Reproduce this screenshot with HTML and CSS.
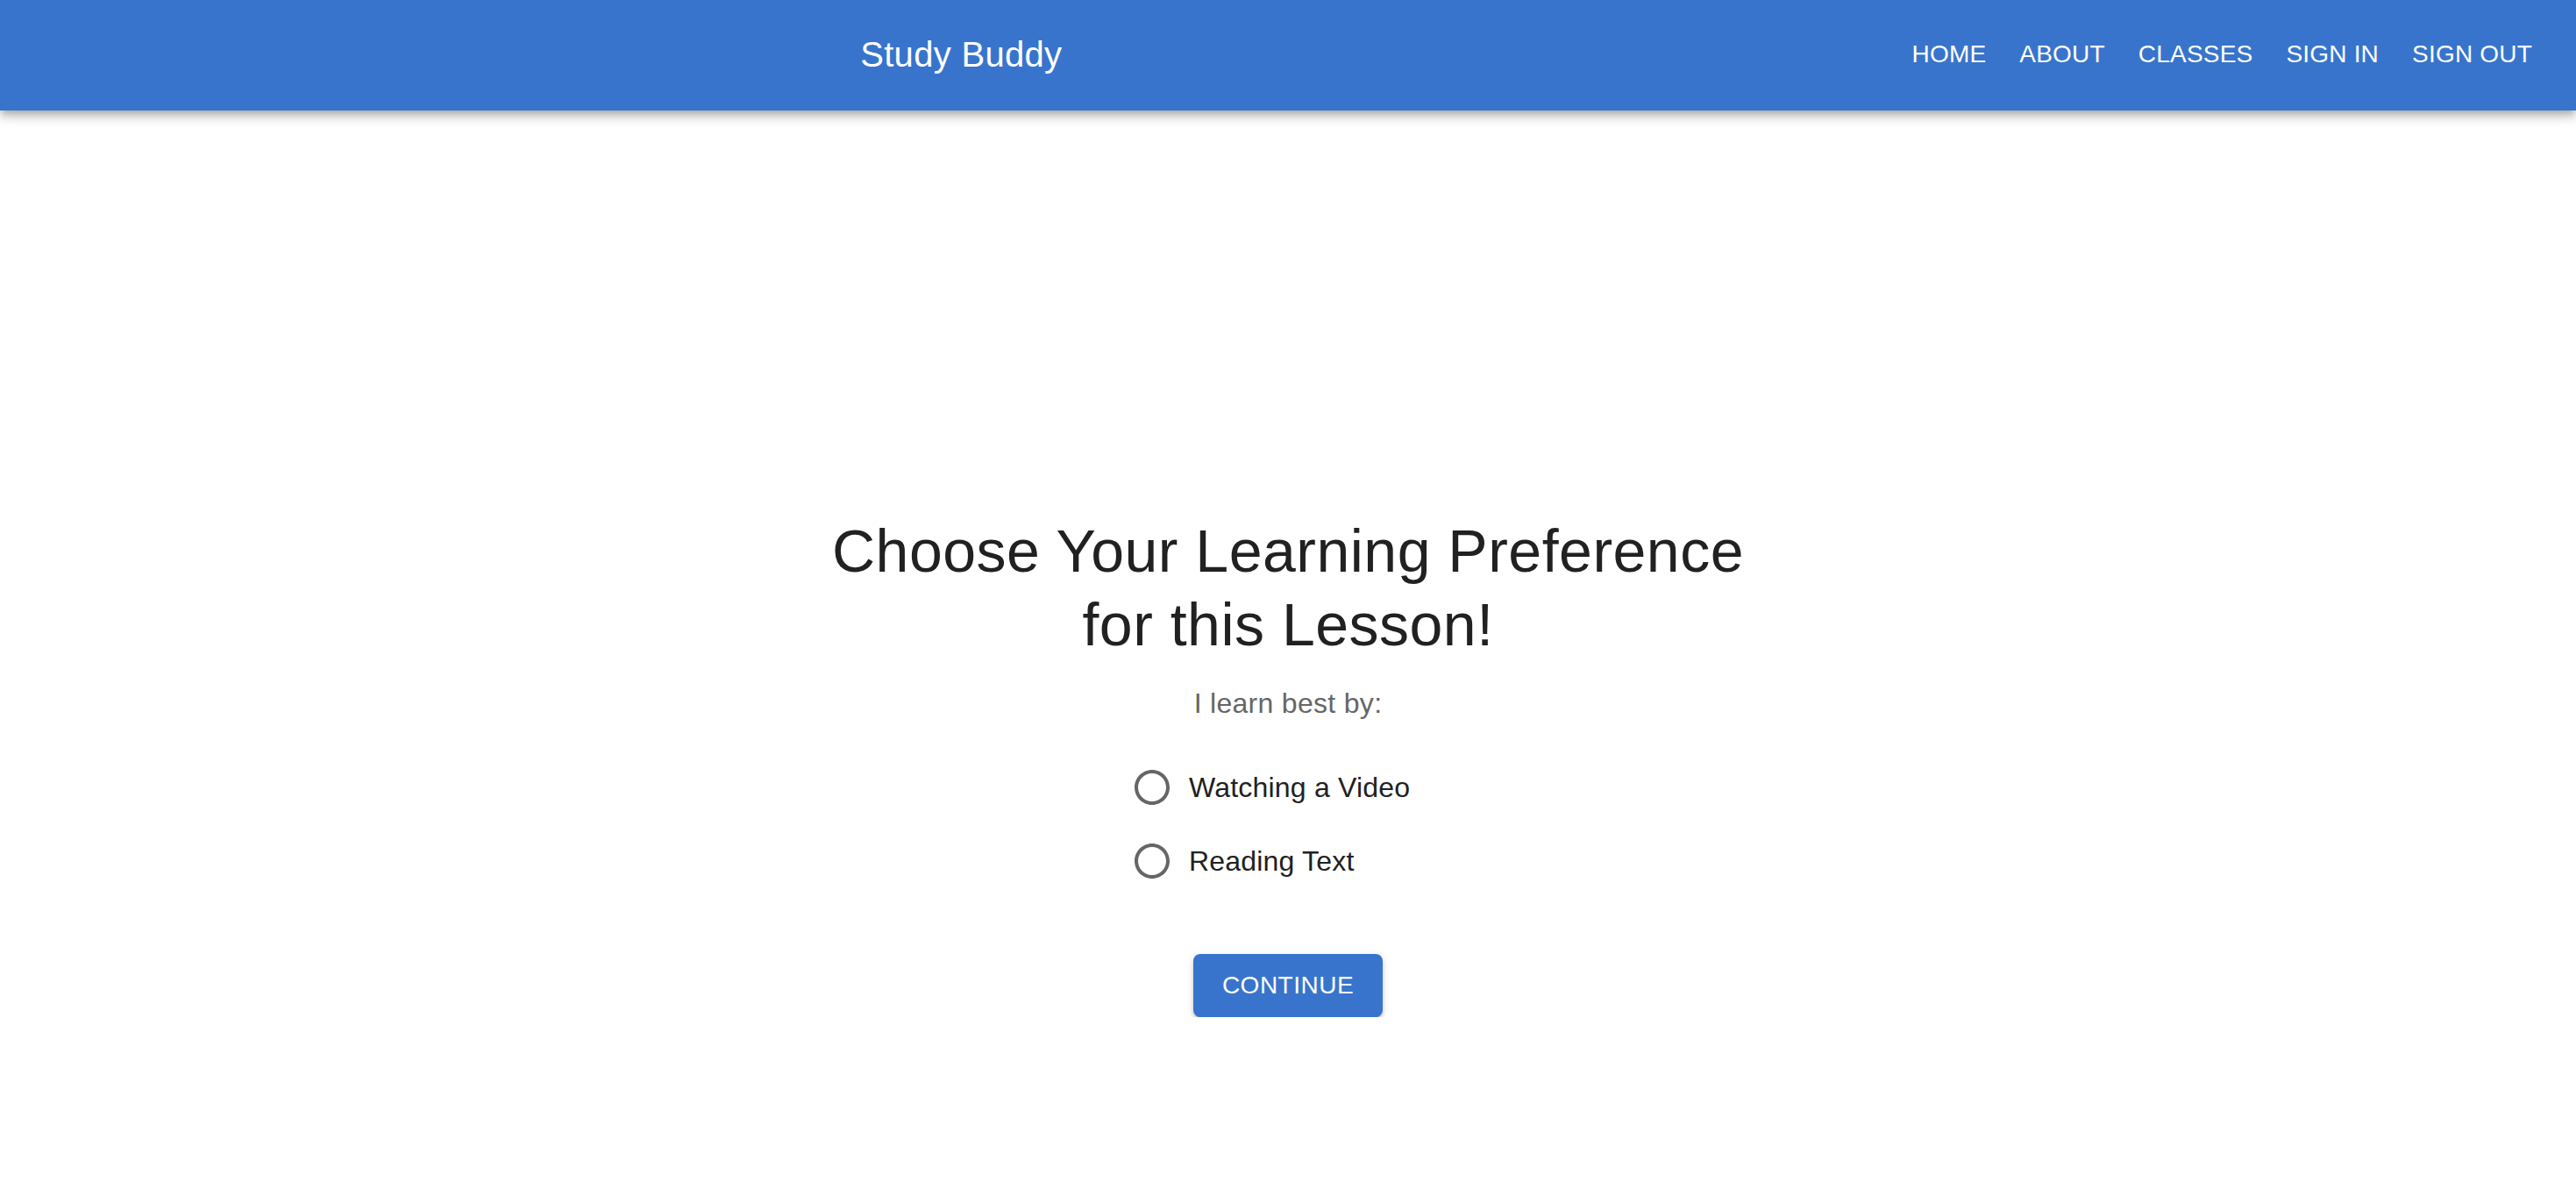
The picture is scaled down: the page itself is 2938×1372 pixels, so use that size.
FILE: index.html
```html
<!DOCTYPE html>
<html lang="en">
<head>
<meta charset="utf-8">
<title>Study Buddy</title>
<link rel="stylesheet" href="styles.css">
</head>
<body>
<header class="appbar">
  <div class="brand">Study Buddy</div>
  <nav class="nav">
    <a class="nav-btn">Home</a>
    <a class="nav-btn">About</a>
    <a class="nav-btn">Classes</a>
    <a class="nav-btn">Sign In</a>
    <a class="nav-btn">Sign Out</a>
  </nav>
</header>
<main class="main">
  <h1 class="title">Choose Your Learning Preference for this Lesson!</h1>
  <p class="subtitle">I learn best by:</p>
  <div class="radio-group">
    <label class="option">
      <span class="radio">
        <svg viewBox="0 0 24 24" width="48" height="48"><path d="M12 2C6.48 2 2 6.48 2 12s4.48 10 10 10 10-4.48 10-10S17.52 2 12 2zm0 18c-4.42 0-8-3.58-8-8s3.58-8 8-8 8 3.58 8 8-3.58 8-8 8z"/></svg>
      </span>
      <span class="option-label">Watching a Video</span>
    </label>
    <label class="option">
      <span class="radio">
        <svg viewBox="0 0 24 24" width="48" height="48"><path d="M12 2C6.48 2 2 6.48 2 12s4.48 10 10 10 10-4.48 10-10S17.52 2 12 2zm0 18c-4.42 0-8-3.58-8-8s3.58-8 8-8 8 3.58 8 8-3.58 8-8 8z"/></svg>
      </span>
      <span class="option-label">Reading Text</span>
    </label>
  </div>
  <button class="continue">Continue</button>
</main>
</body>
</html>
```
FILE: styles.css
```css
* { box-sizing: border-box; }
html, body {
  margin: 0;
  padding: 0;
  background: #ffffff;
  font-family: "Liberation Sans", Arial, Helvetica, sans-serif;
  color: #212121;
}
.appbar {
  height: 126px;
  background: #3874cc;
  color: #ffffff;
  display: flex;
  align-items: center;
  padding: 0 34px 0 28px;
  box-shadow: 0 4px 8px -2px rgba(0,0,0,0.2), 0 8px 10px 0 rgba(0,0,0,0.14), 0 2px 20px 0 rgba(0,0,0,0.12);
  position: relative;
  z-index: 1;
}
.brand {
  flex: 1;
  text-align: center;
  font-size: 40px;
  line-height: 64px;
  font-weight: 400;
  letter-spacing: 0.3px;
  margin-top: -3px;
}
.nav {
  display: flex;
  align-items: center;
  gap: 6px;
  margin-top: -3px;
}
.nav-btn {
  display: block;
  padding: 12px 16px;
  font-size: 28px;
  line-height: 49px;
  text-transform: uppercase;
  letter-spacing: 0.2px;
  color: #ffffff;
  cursor: pointer;
}
.main {
  display: flex;
  flex-direction: column;
  align-items: center;
  padding-top: 460px;
}
.title {
  margin: 0 0 24px;
  max-width: 1090px;
  text-align: center;
  font-size: 68px;
  line-height: 84px;
  font-weight: 400;
  letter-spacing: 0.5px;
  color: #212121;
}
.subtitle {
  margin: 0 0 30px;
  font-size: 32px;
  line-height: 48px;
  letter-spacing: 0.3px;
  color: #666666;
}
.radio-group {
  display: flex;
  flex-direction: column;
  width: 350px;
}
.option {
  display: flex;
  align-items: center;
  height: 84px;
  margin-left: -22px;
  margin-right: 32px;
  cursor: pointer;
}
.radio {
  width: 84px;
  height: 84px;
  display: flex;
  align-items: center;
  justify-content: center;
  flex: none;
}
.radio svg { fill: #666666; display: block; }
.option-label {
  font-size: 32px;
  line-height: 48px;
  letter-spacing: 0.2px;
  color: #212121;
}
.continue {
  margin-top: 64px;
  background: #3874cc;
  color: #ffffff;
  border: none;
  border-radius: 8px;
  padding: 12px 33px;
  font-family: "Liberation Sans", Arial, Helvetica, sans-serif;
  font-size: 28px;
  line-height: 48px;
  font-weight: 400;
  letter-spacing: 0.5px;
  text-transform: uppercase;
  box-shadow: 0 6px 2px -4px rgba(0,0,0,0.2), 0 4px 4px 0 rgba(0,0,0,0.14), 0 2px 10px 0 rgba(0,0,0,0.12);
  cursor: pointer;
}
```
